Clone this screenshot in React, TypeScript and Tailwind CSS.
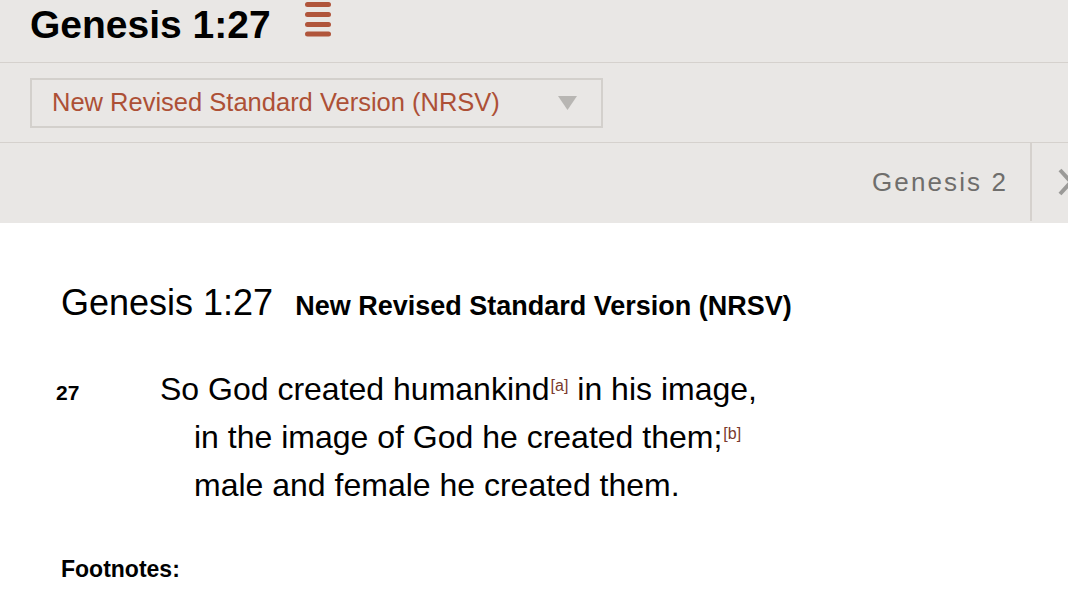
import React from "react";

const font = { fontFamily: '"Liberation Sans", Arial, sans-serif' };

function MenuIcon() {
  return (
    <svg width="26" height="36" viewBox="0 0 26 36" className="block">
      <rect x="0" y="0" width="26" height="5" rx="2.5" fill="#b0553b" />
      <rect x="0" y="10" width="26" height="5" rx="2.5" fill="#b0553b" />
      <rect x="0" y="20" width="26" height="5" rx="2.5" fill="#b0553b" />
      <rect x="0" y="29.5" width="26" height="5" rx="2.5" fill="#b0553b" />
    </svg>
  );
}

function Fn({ children }: { children: React.ReactNode }) {
  return (
    <span className="text-[16px] text-[#7a3a2c] align-[9px] leading-none ml-[1px]">
      [{children}]
    </span>
  );
}

export default function App() {
  return (
    <div className="w-[1068px] h-[613px] overflow-hidden bg-white text-black" style={font}>
      {/* top bar */}
      <div className="bg-[#e9e7e5]">
        <div className="h-[62px] flex items-start pl-[30px] pt-[5px]">
          <h1 className="text-[39px] leading-[39px] font-bold">Genesis 1:27</h1>
          <div className="ml-[34px] -mt-[3px]">
            <MenuIcon />
          </div>
        </div>

        <div className="h-[80px] border-t border-[#d5d1cd] pl-[30px] pt-[15px]">
          <div className="w-[573px] h-[50px] border-2 border-[#d3d0cc] flex items-center pl-[20px] pr-[24px]">
            <span className="flex-1 text-[25.5px] text-[#ad5036] leading-none">
              New Revised Standard Version (NRSV)
            </span>
            <svg width="19" height="14" viewBox="0 0 19 14">
              <polygon points="0,0 19,0 9.5,14" fill="#b8b6b3" />
            </svg>
          </div>
        </div>

        <div className="h-[81px] border-t border-[#d5d1cd] flex items-stretch">
          <div className="flex-1" />
          <div className="flex items-center pr-[22px] pb-[2px] text-[26px] tracking-[2.1px] text-[#6f6e6c]">
            Genesis 2
          </div>
          <div className="w-[2px] bg-[#d5d1cd] mb-[2px]" />
          <div className="w-[36px] overflow-hidden flex items-center pl-[26px] pb-[2px]">
            <svg width="20" height="28" viewBox="0 0 20 28" className="shrink-0">
              <polyline points="2,2 13,14 2,26" fill="none" stroke="#9b9a98" strokeWidth="4" />
            </svg>
          </div>
        </div>
      </div>

      {/* passage */}
      <div className="pt-[60px]">
        <div className="flex items-baseline pl-[61px] gap-[22px]">
          <h2 className="text-[36px] leading-[40px]">Genesis 1:27</h2>
          <span className="text-[27px] font-bold">New Revised Standard Version (NRSV)</span>
        </div>

        <div className="mt-[38px] pl-[56px] flex items-baseline">
          <span className="w-[104px] shrink-0 text-[21px] font-bold">27</span>
          <div className="text-[32px] leading-[48px]">
            <div>
              So God created humankind<Fn>a</Fn> in his image,
            </div>
            <div className="pl-[34px]">
              in the image of God he created them;<Fn>b</Fn>
            </div>
            <div className="pl-[34px]">male and female he created them.</div>
          </div>
        </div>

        <div className="mt-[46px] pl-[61px] text-[23px] leading-[28px] font-bold">Footnotes:</div>
      </div>
    </div>
  );
}
